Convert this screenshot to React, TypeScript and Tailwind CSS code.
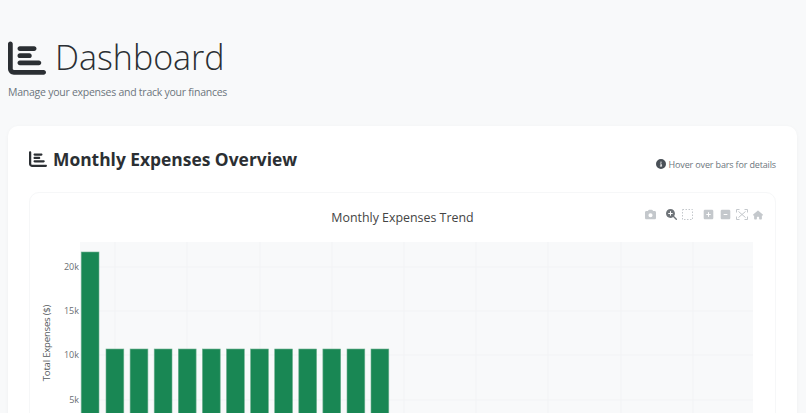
import { FaChartBar, FaCamera, FaCircleInfo, FaHouse, FaMagnifyingGlassPlus, FaSquareMinus, FaSquarePlus } from "react-icons/fa6";

const FONT = "font-['Open_Sans','Liberation_Sans',sans-serif]";

const gridX = [115, 187, 260, 332, 404, 476, 548, 621, 693];
const gridY = [267, 311, 355, 400];
const ticks = [
    { label: "20k", y: 267 },
    { label: "15k", y: 311 },
    { label: "10k", y: 355 },
    { label: "5k", y: 400 },
];
const bars = [81.2, 106, 130.1, 154.2, 178.3, 202.4, 226.5, 250.6, 274.7, 298.8, 322.9, 347, 371];

const ModeBar = () => (
    <div className="flex items-center text-[#c4c8cc]">
        <FaCamera className="text-[11px] mr-[10px]" />
        <FaMagnifyingGlassPlus className="text-[11px] text-[#6f7479] mr-[5px]" />
        <svg width="11" height="11" viewBox="0 0 11 11" className="mr-[10px]">
            <rect x="0.5" y="0.5" width="10" height="10" fill="none" stroke="#c4c8cc" strokeWidth="1" strokeDasharray="1.5 1.5" />
        </svg>
        <FaSquarePlus className="text-[11px] mr-[6px]" />
        <FaSquareMinus className="text-[11px] mr-[5px]" />
        <svg width="12" height="11" viewBox="0 0 12 11" className="mr-[5px]">
            <path d="M2.5 2.5l7 6M9.5 2.5l-7 6" stroke="#c4c8cc" strokeWidth="1" fill="none" />
            <path d="M0.5 3.5v-3h3M8.5 0.5h3v3M0.5 7.5v3h3M8.5 10.5h3v-3" stroke="#c4c8cc" strokeWidth="1" fill="none" />
        </svg>
        <FaHouse className="text-[10px]" />
    </div>
);

// viewBox is in page coordinates, the chart starts at (30, 242)
const Chart = () => (
    <svg width="745" height="180" viewBox="30 242 745 180" className="block">
        <rect x="80" y="242" width="673" height="180" fill="#f8f9fa" />
        {gridX.map((x) => (
            <line key={x} x1={x} x2={x} y1="242" y2="422" stroke="#f2f3f5" strokeWidth="1" />
        ))}
        {gridY.map((y) => (
            <line key={y} x1="80" x2="753" y1={y} y2={y} stroke="#f2f3f5" strokeWidth="1" />
        ))}
        {bars.map((x, i) => (
            <rect
                key={x}
                x={x}
                y={i === 0 ? 252 : 349}
                width="17.8"
                height={i === 0 ? 170 : 73}
                fill="#198754"
                stroke="#6fb08f"
                strokeWidth="0.6"
            />
        ))}
        {ticks.map((t) => (
            <text key={t.label} x="79" y={t.y + 3} textAnchor="end" fontSize="9" fill="#6a6f73" fontFamily="Open Sans">
                {t.label}
            </text>
        ))}
        <text transform="translate(50 343) rotate(-90)" textAnchor="middle" fontSize="9.6" letterSpacing="-0.22" fill="#55595d" fontFamily="Open Sans">
            Total Expenses ($)
        </text>
    </svg>
);

const App = () => {
    return (
        <div className={`${FONT} h-[413px] w-[806px] overflow-hidden bg-[#f8f9fa] px-2 pt-[37px]`}>
            <div className="flex items-center gap-[9px] h-[40px] text-[#2b2f33]">
                <FaChartBar className="text-[38px] translate-y-[1px]" />
                <h1 className="text-[34px] font-light leading-[40px] text-[#2b2f33]">Dashboard</h1>
            </div>
            <p className="mt-[7px] text-[10.5px] tracking-[-0.25px] leading-[17px] text-[#6c757d]">Manage your expenses and track your finances</p>

            <div className="mt-[25px] w-[789px] rounded-[10px] bg-white px-[21px] pt-[21px] shadow-[0_1px_4px_rgba(0,0,0,0.04)]">
                <div className="flex items-end justify-between h-[24px]">
                    <h2 className="flex items-center gap-[6px] text-[17.4px] font-bold leading-[24px] text-[#2b2f33]">
                        <FaChartBar className="text-[18px]" />
                        Monthly Expenses Overview
                    </h2>
                    <div className="flex items-center gap-[3px] text-[9px] tracking-[-0.15px] text-[#6c757d]">
                        <FaCircleInfo className="text-[10px] text-[#495057]" />
                        Hover over bars for details
                    </div>
                </div>

                <div className="mt-[21px] rounded-[10px] border border-[#f6f7f8] bg-white">
                    <div className="relative h-[49px]">
                        <div className="pt-[16px] text-center text-[12.4px] leading-[18px] text-[#444]">Monthly Expenses Trend</div>
                        <div className="absolute right-[12px] top-[16px]">
                            <ModeBar />
                        </div>
                    </div>
                    <Chart />
                </div>
            </div>
        </div>
    );
};

export default App;
